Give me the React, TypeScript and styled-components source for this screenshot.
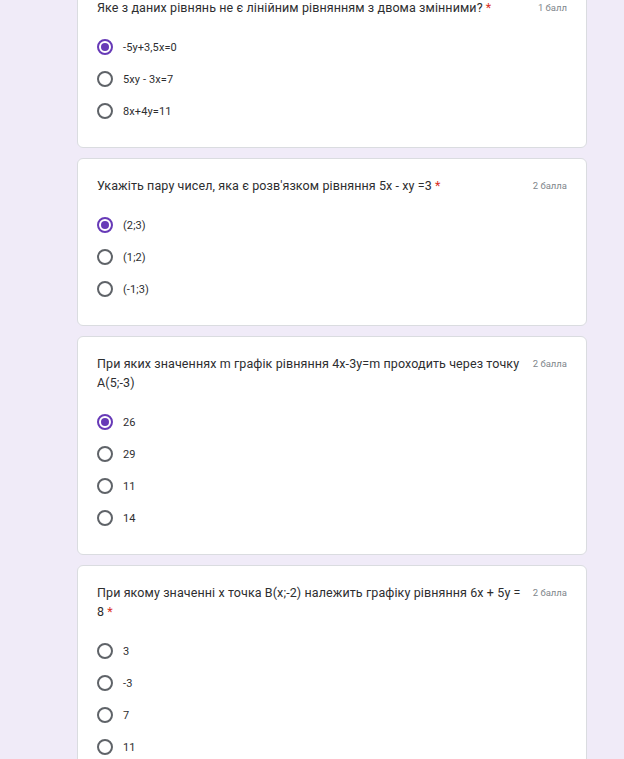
import React from "react";
import styled, { createGlobalStyle } from "styled-components";

const Global = createGlobalStyle`
  html, body {
    margin: 0;
    padding: 0;
    background: #f0ebf8;
    overflow: hidden;
  }
  body {
    font-family: Roboto, "Noto Sans", Arial, sans-serif;
    color: #202124;
  }
`;

const Page = styled.div`
  display: flex;
  flex-direction: column;
  gap: 10px;
  width: 510px;
  margin: -20px 0 0 77px;
`;

const Card = styled.div`
  background: #fff;
  border: 1px solid #dadce0;
  border-radius: 6px;
  padding: 17px 19px 20px 19px;
  display: flex;
  flex-direction: column;
  gap: 14px;
`;

const Header = styled.div`
  display: flex;
  align-items: flex-start;
`;

const Title = styled.div`
  flex: 1;
  font-size: 12.5px;
  line-height: 19px;
  letter-spacing: 0.1px;
  color: #2d2e30;
`;

const Required = styled.span`
  color: #d93025;
  margin-left: 3px;
`;

const Points = styled.div`
  flex: none;
  margin-left: 8px;
  font-size: 9.5px;
  line-height: 19px;
  color: #80868b;
`;

const Options = styled.div`
  display: flex;
  flex-direction: column;
`;

const Option = styled.div`
  display: flex;
  align-items: center;
  height: 32px;
`;

const Radio = styled.span<{ $checked?: boolean }>`
  box-sizing: border-box;
  width: 16px;
  height: 16px;
  border-radius: 50%;
  border: 2px solid ${(p) => (p.$checked ? "#673ab7" : "#5f6368")};
  display: flex;
  align-items: center;
  justify-content: center;
  flex: none;
  &::after {
    content: "";
    width: 8px;
    height: 8px;
    border-radius: 50%;
    background: ${(p) => (p.$checked ? "#673ab7" : "transparent")};
  }
`;

const Label = styled.span`
  margin-left: 10px;
  font-size: 11px;
  color: #2d2e30;
  letter-spacing: 0.1px;
`;

type Q = {
  title: string;
  required: boolean;
  points: string;
  options: string[];
  checked: number;
};

const questions: Q[] = [
  {
    title: "Яке з даних рівнянь не є лінійним рівнянням з двома змінними?",
    required: true,
    points: "1 балл",
    options: ["-5y+3,5x=0", "5xy - 3x=7", "8x+4y=11"],
    checked: 0,
  },
  {
    title: "Укажіть пару чисел, яка є розв'язком рівняння 5x - xy =3",
    required: true,
    points: "2 балла",
    options: ["(2;3)", "(1;2)", "(-1;3)"],
    checked: 0,
  },
  {
    title:
      "При яких значеннях m графік рівняння 4x-3y=m проходить через точку A(5;-3)",
    required: false,
    points: "2 балла",
    options: ["26", "29", "11", "14"],
    checked: 0,
  },
  {
    title: "При якому значенні х точка B(x;-2) належить графіку рівняння 6x + 5y = 8",
    required: true,
    points: "2 балла",
    options: ["3", "-3", "7", "11"],
    checked: -1,
  },
];

export default function App() {
  return (
    <>
      <Global />
      <Page>
        {questions.map((q, i) => (
          <Card key={i}>
            <Header>
              <Title>
                {q.title}
                {q.required && <Required>*</Required>}
              </Title>
              <Points>{q.points}</Points>
            </Header>
            <Options>
              {q.options.map((o, j) => (
                <Option key={j}>
                  <Radio $checked={j === q.checked} />
                  <Label>{o}</Label>
                </Option>
              ))}
            </Options>
          </Card>
        ))}
      </Page>
    </>
  );
}
